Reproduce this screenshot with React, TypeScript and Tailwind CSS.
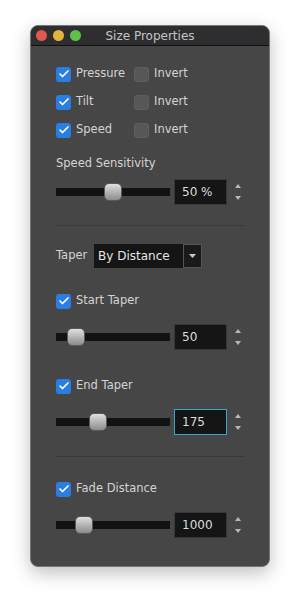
import { Check } from 'lucide-react';

const font = { fontFamily: '"DejaVu Sans", "Liberation Sans", sans-serif' };

function Box({ checked }: { checked: boolean }) {
  return checked ? (
    <span className="flex h-[15px] w-[15px] shrink-0 items-center justify-center rounded-[3px] bg-[#2a7de1]">
      <Check className="h-[12px] w-[12px] text-white" strokeWidth={3.5} />
    </span>
  ) : (
    <span className="h-[15px] w-[15px] shrink-0 rounded-[3px] border border-[#5e5e5e] bg-[#575757]" />
  );
}

function CheckRow({ label, invert = true }: { label: string; invert?: boolean }) {
  return (
    <div className="flex h-[28px] items-center whitespace-nowrap">
      <div className={`flex items-center gap-[5px] ${invert ? 'w-[78px]' : ''}`}>
        <Box checked />
        <span className="text-[11.5px] text-[#d4d4d4]">{label}</span>
      </div>
      {invert && (
        <div className="flex items-center gap-[5px]">
          <Box checked={false} />
          <span className="text-[11.5px] text-[#d4d4d4]">Invert</span>
        </div>
      )}
    </div>
  );
}

function Stepper() {
  return (
    <div className="ml-[8px] flex flex-col items-center gap-[8px]">
      <svg width="6" height="4" viewBox="0 0 6 4">
        <path d="M3 0 L6 4 L0 4 Z" fill="#b8b8b8" />
      </svg>
      <svg width="6" height="4" viewBox="0 0 6 4">
        <path d="M0 0 L6 0 L3 4 Z" fill="#b8b8b8" />
      </svg>
    </div>
  );
}

function SliderRow({ thumb, value, focused = false }: { thumb: number; value: string; focused?: boolean }) {
  return (
    <div className="flex h-[26px] items-center">
      <div className="relative h-[8px] w-[114px] bg-[#121212]">
        <div
          className="absolute top-[-5px] h-[18px] w-[18px] rounded-[5px] border border-[#5a5a5a] bg-gradient-to-b from-[#e0e0e0] to-[#8c8c8c]"
          style={{ left: thumb }}
        />
      </div>
      <div
        className={`ml-[4px] flex h-[26px] w-[53px] items-center pl-[7px] text-[12px] text-[#dcdcdc] bg-[#151515] border ${
          focused ? 'border-[#36a9c8]' : 'border-[#383838]'
        }`}
      >
        {value}
      </div>
      <Stepper />
    </div>
  );
}

export default function App() {
  return (
    <div className="min-h-[601px] bg-white pt-[25px] pl-[30px]" style={font}>
      <div className="h-[542px] w-[240px] overflow-hidden rounded-[8px] border border-[#777] bg-[#464646] shadow-[0_6px_18px_rgba(0,0,0,0.25)]">
        <div className="relative flex h-[20px] items-center justify-center border-b border-[#111] bg-[#2e2e31]">
          <div className="absolute left-[5px] top-[4px] flex gap-[6px]">
            <span className="h-[11px] w-[11px] rounded-full bg-[#e0574d]" />
            <span className="h-[11px] w-[11px] rounded-full bg-[#e2b53c]" />
            <span className="h-[11px] w-[11px] rounded-full bg-[#5fc04a]" />
          </div>
          <span className="text-[12px] text-[#c4c4c4]">Size Properties</span>
        </div>

        <div className="pl-[25px] pr-[25px] pt-[14px]">
          <CheckRow label="Pressure" />
          <CheckRow label="Tilt" />
          <CheckRow label="Speed" />

          <div className="mt-[11px] text-[11.5px] leading-[16px] text-[#d4d4d4]">Speed Sensitivity</div>
          <div className="mt-[8px]">
            <SliderRow thumb={48} value="50 %" />
          </div>

          <div className="mt-[20px] h-px bg-[#3a3a3a]" />

          <div className="mt-[18px] flex h-[24px] items-center">
            <span className="w-[38px] text-[11.5px] text-[#d4d4d4]">Taper</span>
            <div className="flex h-[24px] w-[89px] items-center bg-[#151515] pl-[4px] text-[12px] text-[#e6e6e6]">
              By Distance
            </div>
            <div className="flex h-[24px] w-[19px] items-center justify-center border border-[#555] bg-[#1a1a1a]">
              <svg width="7" height="4" viewBox="0 0 7 4">
                <path d="M0 0 L7 0 L3.5 4 Z" fill="#c8c8c8" />
              </svg>
            </div>
          </div>

          <div className="mt-[19px]">
            <CheckRow label="Start Taper" invert={false} />
          </div>
          <div className="mt-[9px]">
            <SliderRow thumb={11} value="50" />
          </div>

          <div className="mt-[22px]">
            <CheckRow label="End Taper" invert={false} />
          </div>
          <div className="mt-[9px]">
            <SliderRow thumb={33} value="175" focused />
          </div>

          <div className="mt-[21px] h-px bg-[#3a3a3a]" />

          <div className="mt-[18px]">
            <CheckRow label="Fade Distance" invert={false} />
          </div>
          <div className="mt-[9px]">
            <SliderRow thumb={19} value="1000" />
          </div>
        </div>
      </div>
    </div>
  );
}
